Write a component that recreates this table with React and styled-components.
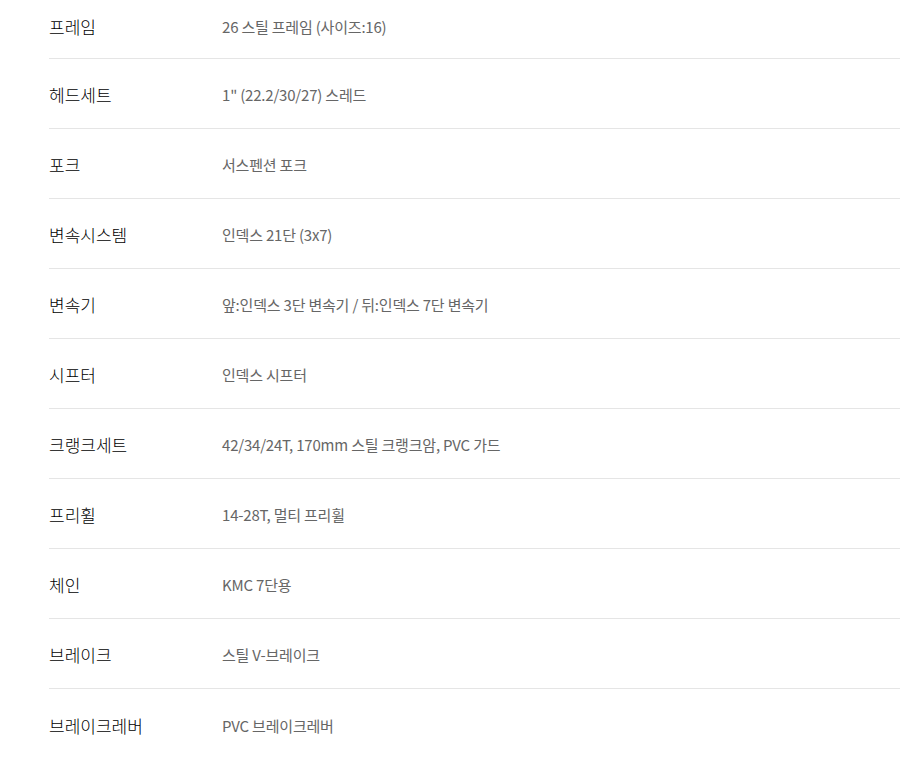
import React from 'react';
import styled, { createGlobalStyle } from 'styled-components';

const GlobalStyle = createGlobalStyle`
  html, body {
    margin: 0;
    padding: 0;
    background: #fff;
  }
  body {
    font-family: "Noto Sans CJK KR", "Noto Sans", sans-serif;
    -webkit-font-smoothing: antialiased;
  }
`;

const SpecList = styled.dl`
  margin: 0;
  padding: 0 0 0 49px;
  width: 851px;
`;

const SpecRow = styled.div`
  display: flex;
  align-items: center;
  box-sizing: border-box;
  height: ${p => (p.$first ? 59 : 70)}px;
  padding-top: ${p => (p.$first ? 0 : 2)}px;
  padding-bottom: ${p => (p.$first ? 6 : 0)}px;
  border-bottom: ${p => (p.$last ? 'none' : '1px solid #e5e5e5')};
`;

const SpecLabel = styled.dt`
  flex: 0 0 173px;
  margin: 0;
  font-size: 17px;
  font-weight: 300;
  color: #000;
`;

const SpecValue = styled.dd`
  margin: 0;
  font-size: 15px;
  font-weight: 400;
  color: #666;
  letter-spacing: -0.2px;
`;

const specs = [
  { label: '프레임', value: '26 스틸 프레임 (사이즈:16)' },
  { label: '헤드세트', value: '1" (22.2/30/27) 스레드' },
  { label: '포크', value: '서스펜션 포크' },
  { label: '변속시스템', value: '인덱스 21단 (3x7)' },
  { label: '변속기', value: '앞:인덱스 3단 변속기 / 뒤:인덱스 7단 변속기' },
  { label: '시프터', value: '인덱스 시프터' },
  { label: '크랭크세트', value: '42/34/24T, 170mm 스틸 크랭크암, PVC 가드' },
  { label: '프리휠', value: '14-28T, 멀티 프리휠' },
  { label: '체인', value: 'KMC 7단용' },
  { label: '브레이크', value: '스틸 V-브레이크' },
  { label: '브레이크레버', value: 'PVC 브레이크레버' },
];

export default function App() {
  return (
    <>
      <GlobalStyle />
      <SpecList>
        {specs.map((s, i) => (
          <SpecRow key={s.label} $first={i === 0} $last={i === specs.length - 1}>
            <SpecLabel>{s.label}</SpecLabel>
            <SpecValue>{s.value}</SpecValue>
          </SpecRow>
        ))}
      </SpecList>
    </>
  );
}
